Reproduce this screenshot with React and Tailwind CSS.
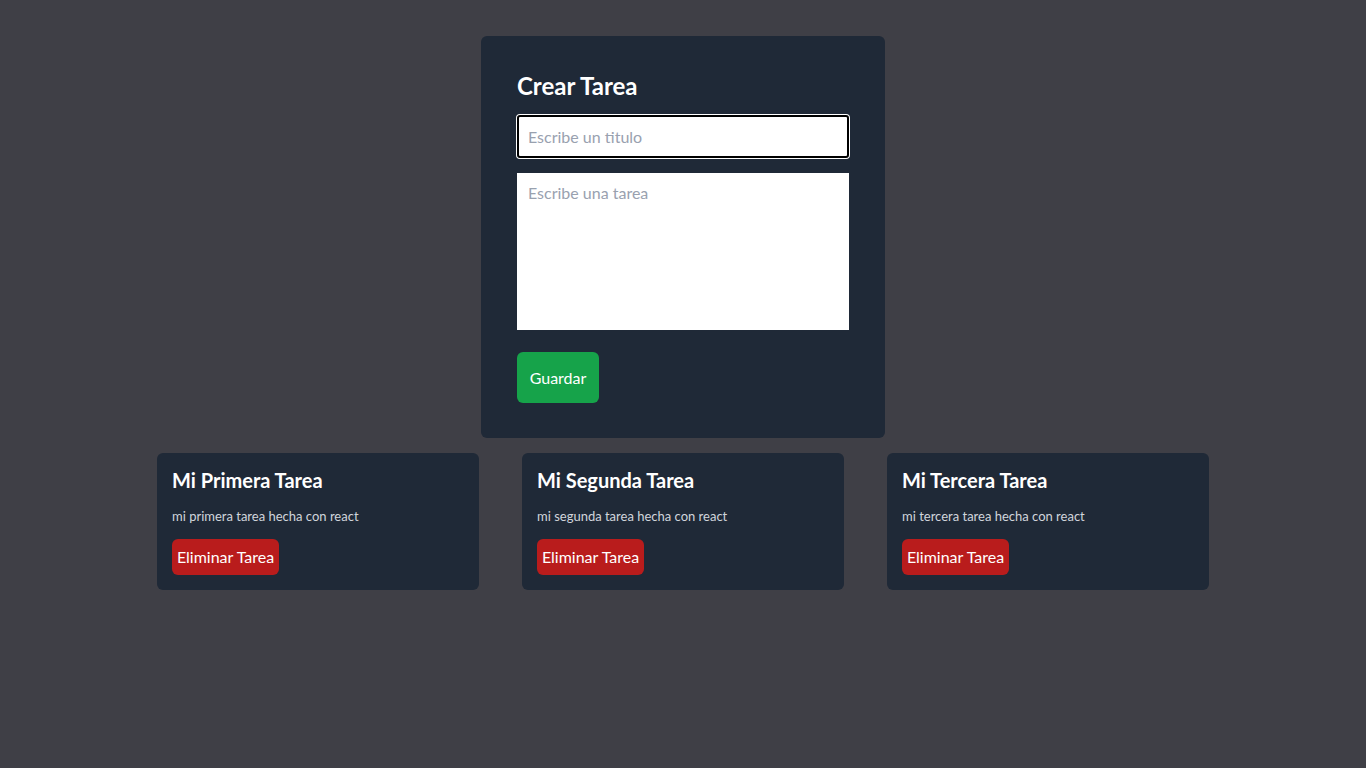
const tasks = [
  { id: 1, title: "Mi Primera Tarea", description: "mi primera tarea hecha con react" },
  { id: 2, title: "Mi Segunda Tarea", description: "mi segunda tarea hecha con react" },
  { id: 3, title: "Mi Tercera Tarea", description: "mi tercera tarea hecha con react" },
];

function TaskForm() {
  return (
    <form className="w-[404px] bg-[#1f2937] rounded-md px-9 pt-9 pb-[35px]">
      <h1 className="text-2xl leading-7 font-bold text-white mb-[15px]">Crear Tarea</h1>
      <input
        placeholder="Escribe un titulo"
        className="block w-full h-[43px] bg-white border-2 border-black rounded-[3px] ring-1 ring-white pl-[9px] text-base text-gray-900 placeholder:text-gray-400 outline-none mb-[15px]"
      />
      <textarea
        placeholder="Escribe una tarea"
        className="block w-full h-[157px] bg-white px-[11px] pt-2 text-base text-gray-900 placeholder:text-gray-400 outline-none resize-none mb-[22px]"
      />
      <button
        type="button"
        className="h-[51px] w-[82px] bg-[#16a34a] text-white text-base rounded-md"
      >
        Guardar
      </button>
    </form>
  );
}

function TaskCard({ task }) {
  return (
    <div className="w-[322px] bg-[#1f2937] rounded-md p-[15px]">
      <h2 className="text-xl leading-6 font-bold text-white mb-3.5">{task.title}</h2>
      <p className="text-[13px] leading-5 text-gray-300">{task.description}</p>
      <button
        type="button"
        className="mt-[13px] h-9 w-[107px] bg-[#b91c1c] text-white text-base rounded-md"
      >
        Eliminar Tarea
      </button>
    </div>
  );
}

export default function App() {
  return (
    <div className="min-h-screen bg-[#3f3f46] font-['Lato',sans-serif] pt-9">
      <div className="flex justify-center">
        <TaskForm />
      </div>
      <div className="flex justify-center gap-[43px] mt-[15px]">
        {tasks.map((task) => (
          <TaskCard key={task.id} task={task} />
        ))}
      </div>
    </div>
  );
}
